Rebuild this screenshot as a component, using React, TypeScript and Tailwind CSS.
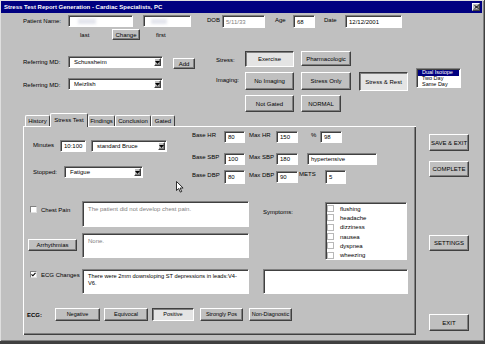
import React from "react";

// Win98 style bevels
const sunken =
  "bg-white border border-t-[#808080] border-l-[#808080] border-b-white border-r-white shadow-[inset_1px_1px_0_#404040]";
const raised =
  "bg-[#c0c0c0] border border-t-white border-l-white border-r-[#404040] border-b-[#404040] shadow-[inset_-1px_-1px_0_#808080]";
const pressed =
  "bg-[#e4e4e4] border border-t-[#404040] border-l-[#404040] border-r-white border-b-white shadow-[inset_1px_1px_0_#808080]";

function Field({ className, children, gray }: { className: string; children?: React.ReactNode; gray?: boolean }) {
  return (
    <div className={`${sunken} ${className} flex items-center px-[3px] shrink-0 ${gray ? "text-[#808080]" : "text-black"}`}>
      {children}
    </div>
  );
}

function Btn({ className, children, down }: { className: string; children: React.ReactNode; down?: boolean }) {
  return (
    <div className={`${down ? pressed : raised} ${className} flex items-center justify-center shrink-0 whitespace-nowrap`}>
      {children}
    </div>
  );
}

function Combo({ className, value }: { className: string; value: string }) {
  return (
    <div className={`${sunken} ${className} flex items-stretch shrink-0`}>
      <span className="flex-1 flex items-center pl-[5px]">{value}</span>
      <div className={`${raised} w-[7px] m-[1px] flex items-center justify-center`}>
        <svg width="5" height="3" viewBox="0 0 5 3">
          <path d="M0 0h5L2.5 3z" fill="#000" />
        </svg>
      </div>
    </div>
  );
}

function Check({ checked }: { checked?: boolean }) {
  return (
    <div className="w-[7px] h-[7px] shrink-0 bg-white border border-t-[#808080] border-l-[#808080] border-b-[#dfdfdf] border-r-[#dfdfdf] flex items-center justify-center">
      {checked && (
        <svg width="5" height="5" viewBox="0 0 5 5">
          <path d="M0.5 2.3l1.4 1.5L4.5 0.8" stroke="#000" strokeWidth="1.1" fill="none" />
        </svg>
      )}
    </div>
  );
}

const tabs = [
  { name: "History", w: "w-[25px]" },
  { name: "Stress Test", w: "w-[38px]" },
  { name: "Findings", w: "w-[27px]" },
  { name: "Conclusion", w: "w-[36px]" },
  { name: "Gated", w: "w-[24px]" },
];

const symptoms = ["flushing", "headache", "dizziness", "nausea", "dyspnea", "wheezing"];

export default function App() {
  return (
    <div className="w-[485px] h-[344px] bg-[#404040] font-['Liberation_Sans',Arial,sans-serif] text-[6px] leading-none text-black overflow-hidden">
      <div className="relative w-[484px] h-[341px] bg-[#c0c0c0] border-l border-t border-l-[#dfdfdf] border-t-[#dfdfdf] shadow-[inset_-1px_-1px_0_#808080]">
        {/* title bar */}
        <div className="h-[12px] mr-[2px] bg-[#000080] flex items-center justify-between pl-[3px] pr-[2px]">
          <span className="text-white font-bold text-[6px]">Stress Test Report Generation - Cardiac Specialists, PC</span>
          <div className={`${raised} w-[8px] h-[8px] flex items-center justify-center`}>
            <svg width="5" height="4" viewBox="0 0 5 4">
              <path d="M0.5 0.3l4 3.4M4.5 0.3l-4 3.4" stroke="#000" strokeWidth="1" />
            </svg>
          </div>
        </div>

        {/* patient row */}
        <div className="flex items-start h-[13px] mt-[2px]">
          <span className="ml-[22px] w-[37px] mt-[3px] whitespace-nowrap">Patient Name:</span>
          <Field className="ml-[8px] w-[65px] h-[12px]">
            <span className="ml-[6px] w-[18px] h-[5px] bg-[#e2e4ec] blur-[1.5px]" />
          </Field>
          <Field className="ml-[10px] w-[48px] h-[12px]">
            <span className="ml-[4px] w-[16px] h-[5px] bg-[#e2e4ec] blur-[1.5px]" />
          </Field>
          <span className="ml-[16px] w-[15px] mt-[2px]">DOB</span>
          <Field className="w-[43px] h-[13px]" gray>5/11/33</Field>
          <span className="ml-[10px] w-[18px] mt-[2px]">Age</span>
          <Field className="w-[22px] h-[13px]">68</Field>
          <span className="ml-[9px] w-[21px] mt-[2px]">Date</span>
          <Field className="w-[57px] h-[13px]">12/12/2001</Field>
        </div>

        <div className="flex items-start h-[11px] mt-[1px]">
          <span className="ml-[79px] w-[32px] mt-[3px]">last</span>
          <Btn className="w-[28px] h-[11px]">Change</Btn>
          <span className="ml-[16px] mt-[3px]">first</span>
        </div>

        {/* referring + stress / imaging */}
        <div className="flex mt-[11px] h-[61px]">
          <div className="w-[215px] shrink-0 pt-[5px]">
            <div className="flex items-start">
              <span className="ml-[22px] w-[45px] mt-[3px] whitespace-nowrap">Referring MD:</span>
              <Combo className="w-[95px] h-[12px]" value="Schussheim" />
              <Btn className="ml-[10px] mt-[2px] w-[22px] h-[11px]">Add</Btn>
            </div>
            <div className="flex items-start mt-[9px]">
              <span className="ml-[22px] w-[45px] mt-[4px] whitespace-nowrap">Referring MD:</span>
              <Combo className="w-[95px] h-[12px]" value="Meizlish" />
            </div>
          </div>
          <div className="flex flex-col">
            <div className="flex items-start">
              <span className="w-[29px] mt-[6px]">Stress:</span>
              <Btn className="w-[49px] h-[16px]" down>Exercise</Btn>
              <Btn className="ml-[7px] w-[50px] h-[15px]">Pharmacologic</Btn>
            </div>
            <div className="flex items-start mt-[5px]">
              <span className="w-[29px] mt-[5px]">Imaging:</span>
              <Btn className="w-[49px] h-[18px]">No Imaging</Btn>
              <Btn className="ml-[7px] w-[50px] h-[18px]">Stress Only</Btn>
              <Btn className="ml-[8px] w-[49px] h-[19px]" down>Stress &amp; Rest</Btn>
              <div className={`${sunken} ml-[8px] -mt-[4px] w-[45px] h-[20px] p-[1px] flex flex-col text-[5.5px]`}>
                <span className="bg-[#000080] text-white h-[6px] pl-[4px] flex items-center shrink-0">Dual Isotope</span>
                <span className="h-[5.5px] pl-[4px] flex items-center shrink-0">Two Day</span>
                <span className="h-[5.5px] pl-[4px] flex items-center shrink-0">Same Day</span>
              </div>
            </div>
            <div className="flex items-start mt-[4px] ml-[29px]">
              <Btn className="w-[49px] h-[17px]">Not Gated</Btn>
              <Btn className="ml-[7px] w-[40px] h-[17px]">NORMAL</Btn>
            </div>
          </div>
        </div>

        {/* tabs + panel + side buttons */}
        <div className="flex mt-[1px]">
          <div className="ml-[22px] w-[393px] shrink-0">
            <div className="flex items-end h-[13px] pl-[2px]">
              {tabs.map((t, i) =>
                i === 1 ? (
                  <div
                    key={t.name}
                    className={`${t.w} h-[14px] -mb-[1px] relative z-10 bg-[#c0c0c0] border-t border-l border-r border-t-white border-l-white border-r-[#404040] rounded-t-[2px] flex items-center justify-center pb-[1px]`}
                  >
                    {t.name}
                  </div>
                ) : (
                  <div
                    key={t.name}
                    className={`${t.w} h-[11px] bg-[#c0c0c0] border-t border-l border-r border-t-white border-l-white border-r-[#404040] rounded-t-[2px] flex items-center justify-center`}
                  >
                    {t.name}
                  </div>
                )
              )}
            </div>
            <div className="h-[209px] shadow-[inset_1px_1px_0_#ffffff,inset_-1px_-1px_0_#404040,inset_-2px_-2px_0_#808080]">
              {/* vitals */}
              <div className="flex h-[75px]">
                <div className="w-[169px] shrink-0 pl-[10px]">
                  <div className="flex items-start mt-[14px]">
                    <span className="w-[27px] mt-[2px]">Minutes</span>
                    <Field className="w-[26px] h-[12px]">10:100</Field>
                    <Combo className="ml-[5px] w-[76px] h-[12px]" value="standard Bruce" />
                  </div>
                  <div className="flex items-start mt-[14px]">
                    <span className="w-[31px] mt-[3px]">Stopped:</span>
                    <Combo className="w-[79px] h-[12px]" value="Fatigue" />
                  </div>
                </div>
                <div className="flex flex-col">
                  <div className="flex items-start mt-[5px]">
                    <span className="w-[32px] mt-[1px]">Base HR</span>
                    <Field className="w-[21px] h-[12px]">80</Field>
                    <span className="ml-[4px] w-[27px] mt-[1px]">Max HR</span>
                    <Field className="w-[22px] h-[12px]">150</Field>
                    <span className="ml-[13px] w-[9px] mt-[1px]">%</span>
                    <Field className="w-[22px] h-[12px]">98</Field>
                  </div>
                  <div className="flex items-start mt-[10px]">
                    <span className="w-[32px] mt-[1px]">Base SBP</span>
                    <Field className="w-[21px] h-[12px]">100</Field>
                    <span className="ml-[4px] w-[27px] mt-[1px]">Max SBP</span>
                    <Field className="w-[22px] h-[12px]">180</Field>
                    <Field className="ml-[9px] w-[70px] h-[12px]">hypertensive</Field>
                  </div>
                  <div className="flex items-start mt-[5px]">
                    <span className="w-[32px] mt-[2px]">Base DBP</span>
                    <Field className="w-[21px] h-[14px]">80</Field>
                    <span className="ml-[4px] w-[27px] mt-[2px]">Max DBP</span>
                    <Field className="mt-[1px] w-[22px] h-[12px]">90</Field>
                    <span className="ml-[1px] w-[26px] mt-[1px]">METS</span>
                    <Field className="w-[21px] h-[14px]">5</Field>
                  </div>
                </div>
              </div>

              {/* findings */}
              <div className="flex">
                <div className="w-[226px] shrink-0">
                  <div className="flex h-[26px]">
                    <div className="w-[59px] flex items-start pl-[7px] pt-[5px]">
                      <Check />
                      <span className="ml-[4px] mt-[1px]">Chest Pain</span>
                    </div>
                    <div className={`${sunken} w-[167px] h-[26px] px-[5px] pt-[4px] text-[#808080]`}>
                      The patient did not develop chest pain.
                    </div>
                  </div>
                  <div className="flex h-[25px] mt-[6px]">
                    <div className="w-[59px] pl-[5px] pt-[6px]">
                      <Btn className="w-[49px] h-[12px]">Arrhythmias</Btn>
                    </div>
                    <div className={`${sunken} w-[167px] h-[25px] px-[5px] pt-[4px] text-[#808080]`}>None.</div>
                  </div>
                  <div className="flex h-[25px] mt-[11px]">
                    <div className="w-[59px] flex items-start pl-[7px] pt-[2px]">
                      <Check checked />
                      <span className="ml-[4px] mt-[1px]">ECG Changes</span>
                    </div>
                    <div className={`${sunken} w-[167px] h-[25px] pl-[5px] pr-[2px] pt-[3px] leading-[7px] text-[5.7px]`}>
                      There were 2mm downsloping ST depressions in leads:V4-
                      <br />
                      V6.
                    </div>
                  </div>
                </div>
                <div className="ml-[14px] flex flex-col">
                  <div className="flex items-start">
                    <span className="w-[62px] mt-[8px]">Symptoms:</span>
                    <div className={`${sunken} mt-[1px] w-[82px] h-[58px] pt-[1px]`}>
                      {symptoms.map((s) => (
                        <div key={s} className="flex items-center h-[9.3px] pl-[1px]">
                          <div className="w-[7px] h-[7px] shrink-0 bg-white border border-[#b8b8b8]" />
                          <span className="ml-[6px]">{s}</span>
                        </div>
                      ))}
                    </div>
                  </div>
                  <div className={`${sunken} mt-[9px] w-[145px] h-[25px]`} />
                </div>
              </div>

              {/* ECG result */}
              <div className="flex items-start mt-[14px] h-[13px]">
                <span className="ml-[4px] w-[28px] mt-[4px] font-bold">ECG:</span>
                <Btn className="w-[45px] h-[13px] text-[5.5px]">Negative</Btn>
                <Btn className="ml-[4px] w-[44px] h-[13px] text-[5.5px]">Equivocal</Btn>
                <Btn className="ml-[4px] w-[42px] h-[13px] text-[5.5px]" down>Positive</Btn>
                <Btn className="ml-[6px] w-[43px] h-[13px] text-[5.5px]">Strongly Pos</Btn>
                <Btn className="ml-[6px] w-[43px] h-[13px] text-[5.5px]">Non-Diagnostic</Btn>
              </div>
            </div>
          </div>

          <div className="ml-[13px] w-[40px] flex flex-col">
            <Btn className="mt-[21px] w-[40px] h-[17px]">SAVE &amp; EXIT</Btn>
            <Btn className="mt-[10px] w-[40px] h-[16px]">COMPLETE</Btn>
            <Btn className="mt-[58px] w-[40px] h-[16px]">SETTINGS</Btn>
            <Btn className="mt-[63px] w-[40px] h-[17px]">EXIT</Btn>
          </div>
        </div>

        {/* mouse pointer */}
        <svg className="absolute left-[175px] top-[180px]" width="8" height="12" viewBox="0 0 8 12">
          <path d="M0.5 0.5v9l2.2-2 1.6 3.6 1.4-0.6-1.6-3.5h3z" fill="#fff" stroke="#000" strokeWidth="0.8" />
        </svg>
      </div>
    </div>
  );
}
